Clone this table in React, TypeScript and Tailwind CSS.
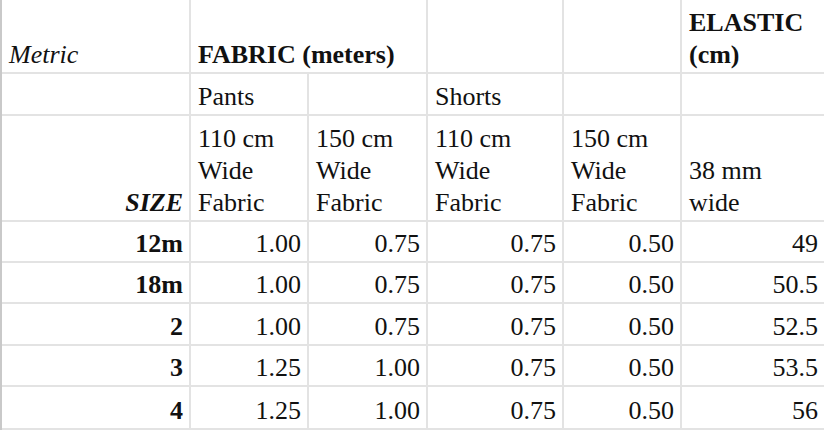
import React from 'react'

type Row = {
  size: string,
  vals: string[]
}

const rows: Row[] = [
  { size: '12m', vals: ['1.00', '0.75', '0.75', '0.50', '49'] },
  { size: '18m', vals: ['1.00', '0.75', '0.75', '0.50', '50.5'] },
  { size: '2', vals: ['1.00', '0.75', '0.75', '0.50', '52.5'] },
  { size: '3', vals: ['1.25', '1.00', '0.75', '0.50', '53.5'] },
  { size: '4', vals: ['1.25', '1.00', '0.75', '0.50', '56'] },
]

const base = 'flex items-end border-b-2 border-[#e3e3e3] pl-[7px] pr-[6px] pb-[1px]'
const cell = `${base} border-r-2`
const last = base

const App: React.FC = (): React.ReactElement => {
  return (
    <div className="w-[824px] h-[432px] bg-white text-[#111] text-[26px] leading-[32px]" style={{ fontFamily: '"Liberation Serif", "Times New Roman", serif' }}>
      <div className="grid grid-cols-[189px_118px_119px_136px_118px_142px] grid-rows-[74px_42px_106px_41px_41px_42px_41px_43px] border-l-2 border-[#c9c9c9] w-[822px]">
        {/* header row */}
        <div className={cell}><span className="italic">Metric</span></div>
        <div className={`${cell} col-span-2 whitespace-nowrap font-bold`}>FABRIC (meters)</div>
        <div className={cell}></div>
        <div className={cell}></div>
        <div className={`${last} font-bold`}><span>ELASTIC<br />(cm)</span></div>

        {/* garment row */}
        <div className={cell}></div>
        <div className={cell}>Pants</div>
        <div className={cell}></div>
        <div className={cell}>Shorts</div>
        <div className={cell}></div>
        <div className={last}></div>

        {/* width row */}
        <div className={`${cell} justify-end font-bold italic`}>SIZE</div>
        <div className={cell}><span>110 cm<br />Wide<br />Fabric</span></div>
        <div className={cell}><span>150 cm<br />Wide<br />Fabric</span></div>
        <div className={cell}><span>110 cm<br />Wide<br />Fabric</span></div>
        <div className={cell}><span>150 cm<br />Wide<br />Fabric</span></div>
        <div className={last}><span>38 mm<br />wide</span></div>

        {rows.map((r) => (
          <React.Fragment key={r.size}>
            <div className={`${cell} justify-end font-bold`}>{r.size}</div>
            {r.vals.map((v, i) => (
              <div key={i} className={`${i === 4 ? last : cell} justify-end`}>{v}</div>
            ))}
          </React.Fragment>
        ))}
      </div>
    </div>
  )
}

export default App
